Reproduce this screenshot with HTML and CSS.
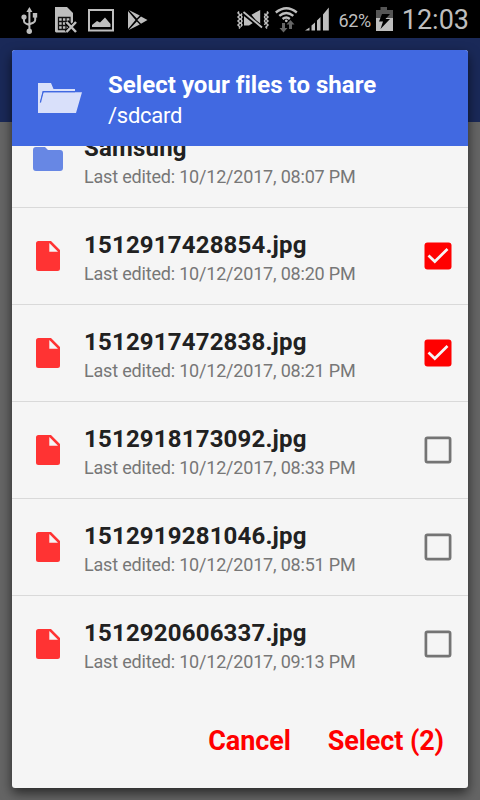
FILE: index.html
```
<!DOCTYPE html>
<html lang="en">
<head>
    <meta charset="UTF-8">
    <meta name="viewport" content="width=device-width, initial-scale=1.0">
    <title>Select your files to share</title>
    <link rel="stylesheet" href="styles.css">
</head>
<body>
    <svg width="0" height="0" class="symbols">
        <symbol id="file" viewBox="0 0 24 30">
            <path fill="#ff3333" fill-rule="evenodd" d="M2.500 0h12.500l9 9V27.500a2.500 2.500 0 0 1-2.500 2.500h-19A2.500 2.500 0 0 1 0 27.500v-25A2.500 2.500 0 0 1 2.500 0zM13.300 2v8.700H22z"/>
        </symbol>
        <symbol id="checked" viewBox="0 0 28 28">
            <rect x=".5" y=".5" width="27" height="27" rx="3" fill="#ff0000"/>
            <path d="M4.500 13.500l6.300 6L23.500 7" fill="none" stroke="#f5f5f5" stroke-width="2.700"/>
        </symbol>
        <symbol id="unchecked" viewBox="0 0 28 28">
            <rect x="1.900" y="1.900" width="24.200" height="24.200" rx="1.500" fill="none" stroke="#747474" stroke-width="2.700"/>
        </symbol>
    </svg>

    <div class="status-bar">
        <svg width="480" height="38" viewBox="0 0 480 38" fill="#bebebe">
            <!-- usb -->
            <path d="M29.400 7l3 5h-6z"/>
            <circle cx="29.300" cy="31.300" r="2.700"/>
            <circle cx="24" cy="17" r="2.600"/>
            <path d="M32.800 13h4.400v4.600h-4.400z"/>
            <path d="M29.400 10v21M24 17v4q0 2 2 2.600l3.400 1.400M35.200 17v3q0 2-2 2.700l-3.800 1.500" fill="none" stroke="#bebebe" stroke-width="2"/>
            <!-- sim -->
            <path d="M55 7h12l6 6v10l-3 9.500H56l-1-1z"/>
            <path d="M58.500 17.500h11.500v12H58.500zM62.300 17.500v12M66 17.500v12M58.500 21.500H70M58.500 25.500H70" fill="none" stroke="#111" stroke-width="1.300"/>
            <path d="M66.500 22l10 10.500M76.500 22l-10 10.500" stroke="#000" stroke-width="5"/>
            <path d="M66.500 22l9.500 10M76 22l-9.500 10" stroke="#bebebe" stroke-width="2.500"/>
            <!-- picture -->
            <rect x="89" y="10" width="24" height="20.500" fill="none" stroke="#bebebe" stroke-width="2"/>
            <path d="M92 27v-2l5-4 3 1.500 5-5 5.500 6.500v3z"/>
            <!-- play -->
            <path d="M128 11v18l7.500-9zM128.800 10l11 5.600-3 3zM128.800 30l11-5.600-3-3zM141 16.400l6.500 3.700-6.500 3.700-3.700-3.700z"/>
            <!-- vibrate / mute -->
            <path d="M244 14.500h3.500L256 21l-7 4.500h-5zM251.500 14.700L260.200 10v16z"/>
            <path d="M243 12.500l20 16" stroke="#000" stroke-width="4.400"/>
            <path d="M243.500 12l18.500 15.500" stroke="#bebebe" stroke-width="1.800"/>
            <path d="M239 11.500l-1 1.500 2 2-2 2 2 2-2 2 2 2-2 2 2 2-1 1.500M242 13.500l-1 1.500 1 2-1 2 1 2-1 2 1 2-1 1.500M267 11.500l1 1.500-2 2 2 2-2 2 2 2-2 2 2 2-2 2 1 1.500M264.500 13.500l1 1.500-1 2 1 2-1 2 1 2-1 2" fill="none" stroke="#bebebe" stroke-width="1.500"/>
            <!-- wifi -->
            <path d="M275.800 12.500q10.700-8.500 21 0M279.300 15.900q7-6 14 0M282.600 19q3.700-3 7.200 0" fill="none" stroke="#bebebe" stroke-width="2.400"/>
            <circle cx="286.300" cy="20.800" r="1.400"/>
            <path fill="#666" d="M282 23h3v5h2.500l-4 4.500-4-4.500h2.500zM289 29h3v-4.500h2.500l-4-4.500-4 4.500h2.500z"/>
            <!-- signal -->
            <path d="M305 30.500l4.500-3v3zM311.500 25.500l3.500-3v8h-3.500zM317 20.500l3.500-3.500v13.500H317zM323 14.500l5.800-7v23H323z"/>
            <!-- battery -->
            <path fill="#555" d="M376 10h4.500V7h6.500v3h6v8h-17z"/>
            <path d="M376 18h17v13h-17z"/>
            <path fill="#000" d="M382 14h8l-4.500 5H390l-9.500 10 2.500-7.500h-4z"/>
        </svg>
        <span class="battery">62%</span>
        <span class="clock">12:03</span>
    </div>
    <div class="toolbar"></div>

    <div class="overlay">
        <div class="dialog">
            <div class="header">
                <svg width="46" height="32" viewBox="0 0 46 32" fill="#d9e0fa">
                    <path d="M1 1h13l2.500 6H38v2H6L3 20.500l-2 4z"/>
                    <path d="M6.500 10.200H45L39 31H1V18.500l2 2.500z"/>
                    <path d="M3.400 20.500L6.100 9.700H38" fill="none" stroke="#4169e1" stroke-width="1.200"/>
                </svg>
                <div class="heading">
                    <div class="title">Select your files to share</div>
                    <div class="path">/sdcard</div>
                </div>
            </div>
            <div class="list">
                <div class="row">
                    <svg class="icon" width="30" height="24" viewBox="0 0 30 24" fill="#6787e4"><path d="M3 0h9l3 3h12a3 3 0 0 1 3 3v15a3 3 0 0 1-3 3H3a3 3 0 0 1-3-3V3a3 3 0 0 1 3-3z"/></svg>
                    <div class="info">
                        <div class="name">Samsung</div>
                        <div class="date">Last edited: 10/12/2017, 08:07 PM</div>
                    </div>
                </div>
                <div class="row">
                    <svg class="icon" width="24" height="30"><use href="#file"/></svg>
                    <div class="info">
                        <div class="name">1512917428854.jpg</div>
                        <div class="date">Last edited: 10/12/2017, 08:20 PM</div>
                    </div>
                    <svg class="check" width="28" height="28"><use href="#checked"/></svg>
                </div>
                <div class="row">
                    <svg class="icon" width="24" height="30"><use href="#file"/></svg>
                    <div class="info">
                        <div class="name">1512917472838.jpg</div>
                        <div class="date">Last edited: 10/12/2017, 08:21 PM</div>
                    </div>
                    <svg class="check" width="28" height="28"><use href="#checked"/></svg>
                </div>
                <div class="row">
                    <svg class="icon" width="24" height="30"><use href="#file"/></svg>
                    <div class="info">
                        <div class="name">1512918173092.jpg</div>
                        <div class="date">Last edited: 10/12/2017, 08:33 PM</div>
                    </div>
                    <svg class="check" width="28" height="28"><use href="#unchecked"/></svg>
                </div>
                <div class="row">
                    <svg class="icon" width="24" height="30"><use href="#file"/></svg>
                    <div class="info">
                        <div class="name">1512919281046.jpg</div>
                        <div class="date">Last edited: 10/12/2017, 08:51 PM</div>
                    </div>
                    <svg class="check" width="28" height="28"><use href="#unchecked"/></svg>
                </div>
                <div class="row">
                    <svg class="icon" width="24" height="30"><use href="#file"/></svg>
                    <div class="info">
                        <div class="name">1512920606337.jpg</div>
                        <div class="date">Last edited: 10/12/2017, 09:13 PM</div>
                    </div>
                    <svg class="check" width="28" height="28"><use href="#unchecked"/></svg>
                </div>
            </div>
            <div class="footer">
                <button>Cancel</button>
                <button>Select (2)</button>
            </div>
        </div>
    </div>
</body>
</html>
```
FILE: styles.css
```
* {
    box-sizing: border-box;
}
body {
    margin: 0;
    height: 800px;
    overflow: hidden;
    background-color: #656565;
    font-family: Roboto, sans-serif;
}
.symbols {
    position: absolute;
}
.status-bar {
    position: relative;
    display: flex;
    justify-content: flex-end;
    height: 38px;
    padding-right: 11px;
    background-color: #000;
    color: #bebebe;
    white-space: nowrap;
}
.status-bar svg {
    position: absolute;
    left: 0;
    top: 0;
}
.battery {
    margin-right: 31px;
    font-size: 18px;
    line-height: 41px;
    letter-spacing: -0.4px;
}
.clock {
    font-size: 27px;
    line-height: 41px;
}
.toolbar {
    height: 84px;
    background-color: #1a2958;
}
.overlay {
    position: absolute;
    left: 0;
    top: 38px;
    width: 480px;
    height: 762px;
    padding: 12px;
    overflow: hidden;
}
.dialog {
    display: flex;
    flex-direction: column;
    height: 738px;
    border-radius: 3px;
    overflow: hidden;
    background-color: #f5f5f5;
    box-shadow: 0 5px 12px rgba(0, 0, 0, 0.6);
}
.header {
    display: flex;
    align-items: center;
    gap: 25px;
    flex: none;
    height: 96px;
    padding-left: 25px;
    background-color: #4169e1;
    color: #fff;
}
.heading {
    padding-top: 4px;
}
.title {
    font-size: 24px;
    font-weight: bold;
    line-height: 32px;
    letter-spacing: 0.04px;
    white-space: nowrap;
}
.path {
    font-size: 22px;
    line-height: 30px;
    letter-spacing: -0.25px;
}
.list {
    display: flex;
    flex-direction: column;
    justify-content: flex-end;
    flex: none;
    height: 546px;
    overflow: hidden;
}
.row {
    display: flex;
    align-items: center;
    flex: none;
    height: 97px;
    padding: 0 16px 0 21px;
    border-bottom: 1px solid #d9d9d9;
}
.row:last-child {
    height: 96px;
    border-bottom: none;
}
.icon {
    flex: none;
    width: 30px;
}
.info {
    flex: 1;
    margin-left: 21px;
    padding-top: 4px;
    white-space: nowrap;
}
.name {
    font-size: 24px;
    font-weight: bold;
    line-height: 30px;
    letter-spacing: 0.19px;
    color: #212121;
}
.date {
    font-size: 18px;
    line-height: 27px;
    letter-spacing: -0.19px;
    color: #777;
}
.footer {
    display: flex;
    justify-content: flex-end;
    gap: 37px;
    flex: 1;
    padding: 33px 24px 0 0;
}
.footer button {
    height: 32px;
    padding: 0;
    border: none;
    background: none;
    color: #ff0000;
    font-family: inherit;
    font-size: 27px;
    font-weight: bold;
    letter-spacing: -0.1px;
}
```
